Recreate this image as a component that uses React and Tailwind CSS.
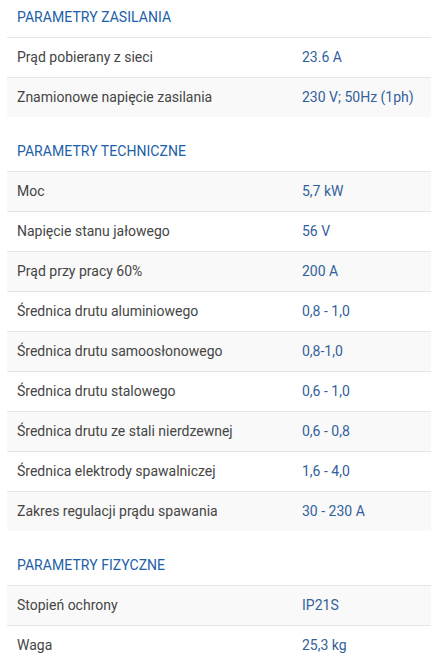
import React from "react";

const sections = [
  {
    title: "PARAMETRY ZASILANIA",
    startGray: false,
    rows: [
      ["Prąd pobierany z sieci", "23.6 A"],
      ["Znamionowe napięcie zasilania", "230 V; 50Hz (1ph)"],
    ],
  },
  {
    title: "PARAMETRY TECHNICZNE",
    startGray: true,
    rows: [
      ["Moc", "5,7 kW"],
      ["Napięcie stanu jałowego", "56 V"],
      ["Prąd przy pracy 60%", "200 A"],
      ["Średnica drutu aluminiowego", "0,8 - 1,0"],
      ["Średnica drutu samoosłonowego", "0,8-1,0"],
      ["Średnica drutu stalowego", "0,6 - 1,0"],
      ["Średnica drutu ze stali nierdzewnej", "0,6 - 0,8"],
      ["Średnica elektrody spawalniczej", "1,6 - 4,0"],
      ["Zakres regulacji prądu spawania", "30 - 230 A"],
    ],
  },
  {
    title: "PARAMETRY FIZYCZNE",
    startGray: true,
    rows: [
      ["Stopień ochrony", "IP21S"],
      ["Waga", "25,3 kg"],
    ],
  },
];

const App = () => {
  return (
    <div
      className="min-h-screen w-full bg-white pl-[7px]"
      style={{ fontFamily: "Roboto, 'Liberation Sans', sans-serif" }}
    >
      {sections.map((section, si) => (
        <div key={section.title} className={si > 0 ? "mt-[17px]" : ""}>
          {/* Section title */}
          <div className="h-[37px] flex items-center pl-[10px] pb-[3px]">
            <h3 className="text-[14px] text-[#2060a8] tracking-[0.05px]">
              {section.title}
            </h3>
          </div>

          {/* Rows */}
          {section.rows.map(([label, value], ri) => {
            const gray = section.startGray ? ri % 2 === 0 : ri % 2 === 1;
            return (
              <div
                key={label}
                className={`h-[40px] flex items-center border-t border-[#e6e6e6] text-[14px] ${
                  gray ? "bg-[#f9f9f9]" : "bg-white"
                }`}
              >
                <span className="w-[295px] pl-[10px] text-[#454545]">{label}</span>
                <span className="text-[#33619c]">{value}</span>
              </div>
            );
          })}
        </div>
      ))}
    </div>
  );
};

export default App;
